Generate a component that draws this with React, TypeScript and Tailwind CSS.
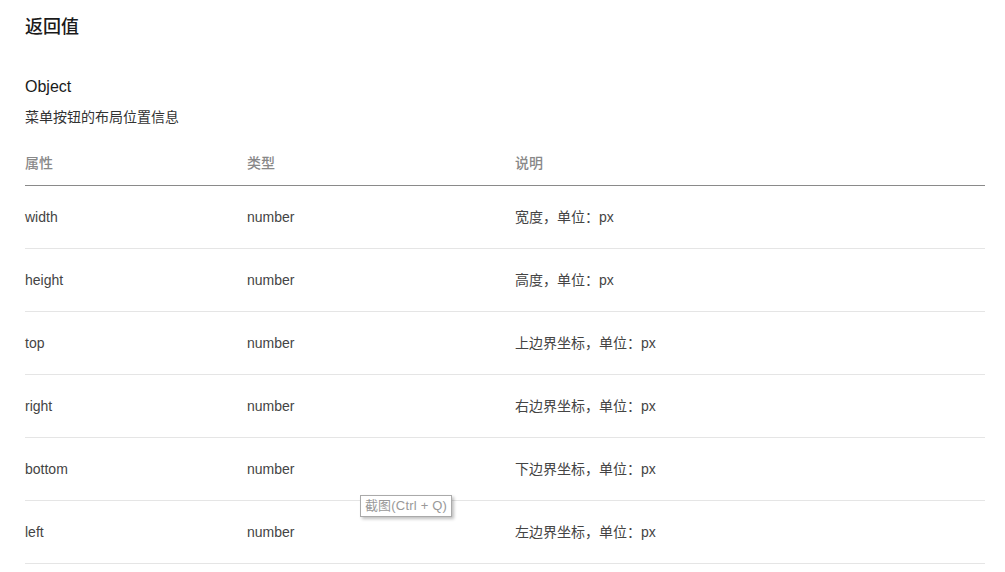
const rows = [
  { name: "width", type: "number", desc: "宽度，单位：px" },
  { name: "height", type: "number", desc: "高度，单位：px" },
  { name: "top", type: "number", desc: "上边界坐标，单位：px" },
  { name: "right", type: "number", desc: "右边界坐标，单位：px" },
  { name: "bottom", type: "number", desc: "下边界坐标，单位：px" },
  { name: "left", type: "number", desc: "左边界坐标，单位：px" },
];

export default function App() {
  return (
    <div
      className="relative min-h-[572px] bg-white pl-[25px] pr-[20px] text-[#333]"
      style={{ fontFamily: '"Liberation Sans", "Noto Sans CJK SC", sans-serif' }}
    >
      <h2 className="pt-[16px] text-[18px] leading-[22px] font-medium text-[#1a1a1a]">返回值</h2>
      <h3 className="mt-[38px] text-[16px] leading-[22px] text-[#1a1a1a]">Object</h3>
      <p className="mt-[9px] text-[14px] leading-[20px] text-[#333]">菜单按钮的布局位置信息</p>

      <div className="mt-[14px] w-[960px]">
        <div className="grid h-[45px] grid-cols-[222px_268px_1fr] items-center border-b border-[#8a8a8a] text-[14px] font-medium text-[#888]">
          <div>属性</div>
          <div>类型</div>
          <div>说明</div>
        </div>
        {rows.map((row) => (
          <div
            key={row.name}
            className="grid h-[63px] grid-cols-[222px_268px_1fr] items-center border-b border-[#e5e5e5] text-[14px] text-[#444]"
          >
            <div>{row.name}</div>
            <div>{row.type}</div>
            <div>{row.desc}</div>
          </div>
        ))}
      </div>

      <div className="absolute left-[360px] top-[495px] flex h-[22px] w-[92px] items-center justify-center border border-[#aaa] bg-white text-[13px] tracking-[0.2px] text-[#999] shadow-[2px_2px_3px_rgba(0,0,0,0.25)]">
        截图(Ctrl + Q)
      </div>
    </div>
  );
}
